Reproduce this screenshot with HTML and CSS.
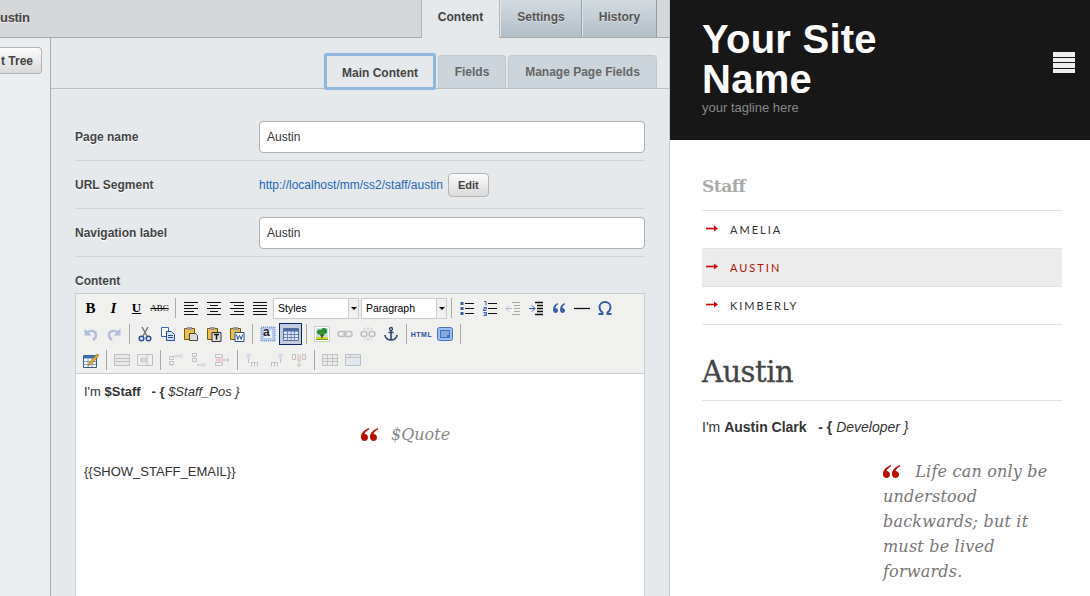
FILE: index.html
```html
<!DOCTYPE html>
<html lang="en">
<head>
  <meta charset="UTF-8">
  <title>Austin - CMS preview</title>
  <link rel="stylesheet" href="styles.css">
</head>
<body>

<div class="cms">
  <div class="topbar">
    <div class="page-title">ustin</div>
    <div class="tabs">
      <div class="tab active">Content</div>
      <div class="tab">Settings</div>
      <div class="tab">History</div>
    </div>
  </div>

  <div class="cms-main">
    <div class="sidebar">
      <button class="btn tree-btn">t Tree</button>
    </div>

    <div class="panel">
      <div class="subtabs">
        <div class="subtab focus">Main Content</div>
        <div class="subtab">Fields</div>
        <div class="subtab">Manage Page Fields</div>
      </div>

      <div class="form">
        <div class="field first">
          <label>Page name</label>
          <div class="input">Austin</div>
        </div>
        <div class="field url">
          <label>URL Segment</label>
          <a class="url-link">http://localhost/mm/ss2/staff/austin</a>
          <button class="btn edit-btn">Edit</button>
        </div>
        <div class="field">
          <label>Navigation label</label>
          <div class="input">Austin</div>
        </div>

        <div class="content-label">Content</div>
        <div class="editor">
          <div class="toolbar">
            <div class="tool-row">
              <span class="tb txt b">B</span>
              <span class="tb txt i">I</span>
              <span class="tb txt u">U</span>
              <span class="tb txt abc">ABC</span>
              <span class="sep"></span>
              <span class="tb"><svg viewBox="0 0 16 16"><path d="M1 2.500h14M1 5.500h10M1 8.500h14M1 11.500h10M1 14.500h14" stroke="#111"/></svg></span>
              <span class="tb"><svg viewBox="0 0 16 16"><path d="M1 2.500h14M4 5.500h8M1 8.500h14M4 11.500h8M1 14.500h14" stroke="#111"/></svg></span>
              <span class="tb"><svg viewBox="0 0 16 16"><path d="M1 2.500h14M5 5.500h10M1 8.500h14M5 11.500h10M1 14.500h14" stroke="#111"/></svg></span>
              <span class="tb"><svg viewBox="0 0 16 16"><path d="M1 2.500h14M1 5.500h14M1 8.500h14M1 11.500h14M1 14.500h14" stroke="#111"/></svg></span>
              <div class="select"><span>Styles</span><i class="caret"></i></div>
              <div class="select para"><span>Paragraph</span><i class="caret"></i></div>
              <span class="sep"></span>
              <span class="tb"><svg viewBox="0 0 16 16"><path d="M6 3.500h9M6 8.500h9M6 13.500h9" stroke="#111"/><path d="M1.500 2h3v3h-3zM1.500 7h3v3h-3zM1.500 12h3v3h-3z" fill="#3a5a9a"/></svg></span>
              <span class="tb"><svg viewBox="0 0 16 16"><path d="M6 3.500h9M6 8.500h9M6 13.500h9" stroke="#111"/><path d="M2 1.500h2v4M1.500 7.500h3v1.500h-3v1.500h3M1.500 12.500h3v3h-3M2 14h2" stroke="#3a62b8" fill="none"/></svg></span>
              <span class="tb"><svg class="off" viewBox="0 0 16 16"><path d="M7 2.500h8M9 5.500h6M9 8.500h6M9 11.500h6M7 14.500h8" stroke="#222"/><path d="M7 8.500H1M4 5.500l-3 3 3 3" stroke="#3a62b8" fill="none"/></svg></span>
              <span class="tb"><svg viewBox="0 0 16 16"><path d="M7 2.500h8M9 5.500h6M9 8.500h6M9 11.500h6M7 14.500h8" stroke="#111" stroke-width="1.300"/><path d="M1 8.500h6M4 5.500l3 3-3 3" stroke="#2a52a8" fill="none"/></svg></span>
              <span class="tb"><svg viewBox="0 0 16 16"><path d="M7 3C4 4 2 6 2 9.500 2 11.500 3 13 4.500 13S7 12 7 10.500 6 8 4.500 8C4.500 6.500 5.500 5 7 4.500zM14 3c-3 1-5 3-5 6.500 0 2 1 3.500 2.500 3.500S14 12 14 10.500 13 8 11.500 8c0-1.500 1-3 2.500-3.500z" fill="#3a5fa8"/></svg></span>
              <span class="tb"><svg viewBox="0 0 16 16"><path d="M0 8.500h16" stroke="#111" stroke-width="1.300"/></svg></span>
              <span class="tb"><svg viewBox="0 0 16 16"><path d="M1.500 14h4v-1.500C3.500 11 2.500 9 2.500 7 2.500 4 5 2 8 2s5.500 2 5.500 5c0 2-1 4-3 5.500V14h4" fill="none" stroke="#2f5ba8" stroke-width="1.900"/></svg></span>
            </div>

            <div class="tool-row">
              <span class="tb"><svg class="off" viewBox="0 0 16 16"><path d="M4 6.500C8 3.500 13 5 13 9c0 2.500-1.500 4-3 5" fill="none" stroke="#3a62b8" stroke-width="2.400"/><path d="M1.500 2.500v7h7z" fill="#3a62b8"/></svg></span>
              <span class="tb"><svg class="off" viewBox="0 0 16 16"><path d="M12 6.500C8 3.500 3 5 3 9c0 2.500 1.500 4 3 5" fill="none" stroke="#3a62b8" stroke-width="2.400"/><path d="M14.500 2.500v7h-7z" fill="#3a62b8"/></svg></span>
              <span class="sep"></span>
              <span class="tb"><svg viewBox="0 0 16 16"><path d="M5 1l5 9M11 1l-5 9" stroke="#777" stroke-width="1.500"/><circle cx="4.500" cy="12.500" r="2.300" fill="none" stroke="#2a4f9a" stroke-width="1.500"/><circle cx="11.500" cy="12.500" r="2.300" fill="none" stroke="#2a4f9a" stroke-width="1.500"/></svg></span>
              <span class="tb"><svg viewBox="0 0 16 16"><path d="M1.500 1.500h7v9h-7z" fill="#fff" stroke="#3a62b8"/><path d="M6.500 5.500h5l3 3v6h-8z" fill="#cfe0f8" stroke="#2a4f9a"/><path d="M8 9.500h5M8 11.500h5" stroke="#2a4f9a"/></svg></span>
              <span class="tb"><svg viewBox="0 0 16 16"><path d="M1.500 2.500h10v11h-10z" fill="#e8c050" stroke="#7a5a10"/><path d="M4 1h5v3H4z" fill="#999"/><path d="M6.500 7.500h6l2 2v5h-8z" fill="#ddd" stroke="#444"/></svg></span>
              <span class="tb"><svg viewBox="0 0 16 16"><path d="M1.500 2.500h10v11h-10z" fill="#e8c050" stroke="#7a5a10"/><path d="M4 1h5v3H4z" fill="#999"/><path d="M6 6.500h9v9H6z" fill="#ddd" stroke="#333"/><path d="M8 8.500h5M10.500 8.500v5" stroke="#111" stroke-width="1.500"/></svg></span>
              <span class="tb"><svg viewBox="0 0 16 16"><path d="M1.500 2.500h10v11h-10z" fill="#e8c050" stroke="#7a5a10"/><path d="M4 1h5v3H4z" fill="#999"/><path d="M6 6.500h9v9H6z" fill="#fff" stroke="#2a4f9a"/><path d="M7.500 8.500l1.200 5 1.800-4 1.800 4 1.200-5" fill="none" stroke="#2a4f9a"/></svg></span>
              <span class="sep"></span>
              <span class="tb"><svg viewBox="0 0 16 16"><path d="M1 1h14v14H1z" fill="#b8ccf0"/><path d="M1 1h14v14H1z" fill="none" stroke="#5a80d0" stroke-dasharray="1 1"/><path d="M4 4h8v8H4z" fill="#eee"/></svg><em class="tb-a">a</em></span>
              <span class="tb on"><svg viewBox="0 0 16 16"><path d="M.500 2.500h15v12H.500z" fill="#dfe6f4" stroke="#5a6f98"/><path d="M1 2.500h14v3H1z" fill="#4a6aa8"/><path d="M4.500 5v9M8 5v9M11.500 5v9M1 8.500h14M1 11.500h14" stroke="#6f86b4"/></svg></span>
              <span class="sep"></span>
              <span class="tb"><svg viewBox="0 0 16 16"><path d="M.500 .500h15v15H.500z" fill="#fff" stroke="#ccc"/><path d="M2 2h12v9H2z" fill="#bfe4ee"/><path d="M2 11h12v3H2z" fill="#e8d020"/><path d="M2 13h12v1H2z" fill="#5aa02a"/><circle cx="5.500" cy="6" r="2.500" fill="#2a8a2a"/><circle cx="10" cy="5" r="3" fill="#2a8a2a"/><circle cx="8" cy="8" r="2.500" fill="#3a9a3a"/><path d="M7.300 8h1.400v4H7.300z" fill="#5a3a10"/></svg></span>
              <span class="tb"><svg class="off" viewBox="0 0 16 16"><rect x="1" y="5.500" width="8" height="5" rx="2.500" fill="none" stroke="#667" stroke-width="1.500"/><rect x="7" y="5.500" width="8" height="5" rx="2.500" fill="none" stroke="#667" stroke-width="1.500"/></svg></span>
              <span class="tb"><svg class="off" viewBox="0 0 16 16"><rect x="1" y="5.500" width="6" height="5" rx="2.500" fill="none" stroke="#667" stroke-width="1.500"/><rect x="9" y="5.500" width="6" height="5" rx="2.500" fill="none" stroke="#667" stroke-width="1.500"/><path d="M8 1v3M8 12v3M4 2l1.500 2M12 2l-1.500 2M4 14l1.500-2M12 14l-1.500-2" stroke="#667"/></svg></span>
              <span class="tb"><svg viewBox="0 0 16 16"><circle cx="8" cy="3" r="1.500" fill="none" stroke="#2c4770" stroke-width="1.300"/><path d="M8 4.500V14M5.500 6.500h5M2 9c0 3 3 5 6 5s6-2 6-5" fill="none" stroke="#2c4770" stroke-width="1.600"/></svg></span>
              <span class="sep"></span>
              <span class="tb txt html">HTML</span>
              <span class="tb"><svg viewBox="0 0 16 16"><rect x=".500" y="1.500" width="15" height="13" rx="2" fill="#9cc0f0" stroke="#4a70b8"/><path d="M3 4h10v8H3z" fill="#3e70c8"/><path d="M4 6h8M4 8h8M4 10h6" stroke="#cfe0f8"/></svg></span>
              <span class="sep"></span>
            </div>

            <div class="tool-row">
              <span class="tb"><svg viewBox="0 0 16 16"><path d="M.500 3.500h13v12H.500z" fill="#fff" stroke="#3a5a8a"/><path d="M1 3.500h12v3H1z" fill="#3f6fb0"/><path d="M5 6v9M9 6v9M1 9.500h12M1 12.500h12" stroke="#8aa4c8"/><path d="M6 11l8-9 2 1.500-8 9-2.500 1z" fill="#e8b030" stroke="#6a4a10" stroke-width=".5"/></svg></span>
              <span class="sep"></span>
              <span class="tb"><svg class="off" viewBox="0 0 16 16"><path d="M.500 2.500h15v11H.500z" fill="#d5d9e0" stroke="#667"/><path d="M1 6.500h14M1 9.500h14" stroke="#667"/></svg></span>
              <span class="tb"><svg class="off" viewBox="0 0 16 16"><path d="M.500 2.500h15v11H.500z" fill="#eee" stroke="#667"/><path d="M3 5.500h7v5H3z" fill="#9aa4b8"/><path d="M10 2.500v11" stroke="#667"/></svg></span>
              <span class="sep"></span>
              <span class="tb"><svg class="off" viewBox="0 0 16 16"><path d="M1.500 4.500h4v3h-4zM1.500 9.500h4v3h-4zM1.500 13h4" fill="none" stroke="#667"/><path d="M10 2.500h5v3h-5z" fill="#a8bcdc"/><path d="M6 4h4" stroke="#667"/></svg></span>
              <span class="tb"><svg class="off" viewBox="0 0 16 16"><path d="M1.500 1.500h4v3h-4zM1.500 6.500h4v3h-4z" fill="none" stroke="#667"/><path d="M10 11.500h5v3h-5z" fill="#a8bcdc"/><path d="M6 13h4" stroke="#667"/></svg></span>
              <span class="tb"><svg class="off" viewBox="0 0 16 16"><path d="M1.500 2.500h7v3h-7zM1.500 10.500h7v3h-7z" fill="none" stroke="#667"/><path d="M1.500 6.500h9v3h-9z" fill="#e09090"/><path d="M10 8h5M13 6l2 2-2 2" fill="none" stroke="#667"/></svg></span>
              <span class="sep"></span>
              <span class="tb"><svg class="off" viewBox="0 0 16 16"><path d="M1.500 1.500h4v5h-4z" fill="#a8bcdc"/><path d="M3.500 7v4M6.500 10.500h3v4M9.500 10.500h3v4M6.500 10.500v4" fill="none" stroke="#667"/></svg></span>
              <span class="tb"><svg class="off" viewBox="0 0 16 16"><path d="M10.500 1.500h4v5h-4z" fill="#a8bcdc"/><path d="M12.500 7v4M3.500 10.500h3v4M6.500 10.500h3v4M3.500 10.500v4" fill="none" stroke="#667"/></svg></span>
              <span class="tb"><svg class="off" viewBox="0 0 16 16"><path d="M1.500 2.500h3v5h-3zM11.500 2.500h3v5h-3z" fill="none" stroke="#667"/><path d="M6 2.500h4v7H6z" fill="#e09090"/><path d="M8 9.500v5M6 12.500l2 2 2-2" fill="none" stroke="#667"/></svg></span>
              <span class="sep"></span>
              <span class="tb"><svg class="off" viewBox="0 0 16 16"><path d="M.500 2.500h15v11H.500z" fill="#dde3ee" stroke="#667"/><path d="M5.500 2.500v11M10.500 2.500v11M1 6.500h14M1 9.500h14" stroke="#667"/></svg></span>
              <span class="tb"><svg class="off" viewBox="0 0 16 16"><path d="M.500 2.500h15v11H.500z" fill="#c8d8f0" stroke="#667"/><path d="M5.500 2.500v3M1 5.500h14" stroke="#667"/></svg></span>
            </div>
          </div>

          <div class="editor-body">
            <p>I'm <strong>$Staff &nbsp; - {</strong> <em>$Staff_Pos }</em></p>
            <div class="quote-line">
              <svg class="quote-mark" viewBox="0 0 17 13"><path d="M8 0C3 2 0 5 0 9c0 2.500 1.500 4 3.500 4S7 11.500 7 9.500 5.500 6 3.500 6C4 4 6 2.500 8 1.500zM17 0c-5 2-8 5-8 9 0 2.500 1.500 4 3.500 4s3.500-1.500 3.500-3.500S14.500 6 12.500 6c.5-2 2.500-3.500 4.500-4.500z"/></svg>
              <span>$Quote</span>
            </div>
            <p>{{SHOW_STAFF_EMAIL}}</p>
          </div>
        </div>
      </div>
    </div>
  </div>
</div>

<div class="site">
  <header class="site-head">
    <div>
      <h1>Your Site Name</h1>
      <div class="tagline">your tagline here</div>
    </div>
    <div class="burger"><i></i><i></i><i></i><i></i></div>
  </header>

  <div class="site-body">
    <h3>Staff</h3>
    <ul class="staff-nav">
      <li><svg viewBox="0 0 12 7"><path d="M0 2.700h9v1.600H0z"/><path d="M8 .5L12 3.500 8 6.500z"/></svg>AMELIA</li>
      <li class="current"><svg viewBox="0 0 12 7"><path d="M0 2.700h9v1.600H0z"/><path d="M8 .5L12 3.500 8 6.500z"/></svg>AUSTIN</li>
      <li><svg viewBox="0 0 12 7"><path d="M0 2.700h9v1.600H0z"/><path d="M8 .5L12 3.500 8 6.500z"/></svg>KIMBERLY</li>
    </ul>

    <h2>Austin</h2>
    <p class="intro">I'm <strong>Austin Clark &nbsp; - {</strong> <em>Developer }</em></p>

    <blockquote>
      <svg class="quote-mark" viewBox="0 0 17 13"><path d="M8 0C3 2 0 5 0 9c0 2.500 1.500 4 3.500 4S7 11.500 7 9.500 5.500 6 3.500 6C4 4 6 2.500 8 1.500zM17 0c-5 2-8 5-8 9 0 2.500 1.500 4 3.500 4s3.500-1.500 3.500-3.500S14.500 6 12.500 6c.5-2 2.500-3.500 4.500-4.500z"/></svg>
      Life can only be understood backwards; but it must be lived forwards.
    </blockquote>
  </div>
</div>

</body>
</html>
```

FILE: styles.css
```css
* {
  box-sizing: border-box;
}
html, body {
  height: 100%;
}
body {
  margin: 0;
  display: flex;
  height: 596px;
  overflow: hidden;
  font-family: "Liberation Sans", Arial, sans-serif;
  font-size: 12px;
  color: #333;
  background: #fff;
}

/* left side, the cms */
.cms {
  width: 670px;
  flex-shrink: 0;
  display: flex;
  flex-direction: column;
  overflow: hidden;
  background: #e6e9ec;
  border-right: 1px solid #c4c8cb;
}
.topbar {
  height: 38px;
  flex-shrink: 0;
  display: flex;
  justify-content: space-between;
  padding-right: 12px;
  background: #d6d7d9;
  border-bottom: 1px solid #aaa;
}
.page-title {
  font-size: 13px;
  font-weight: bold;
  letter-spacing: -.3px;
  line-height: 35px;
  color: #444;
  text-shadow: 0 1px 0 #eee;
}
.tabs {
  display: flex;
  height: 38px;
}
.tab {
  width: 75px;
  height: 37px;
  padding-top: 10px;
  text-align: center;
  font-weight: bold;
  color: #555;
  text-shadow: 0 1px 0 #ddd;
  background: linear-gradient(#d3dbe1, #b0bec8);
  border-right: 1px solid #8ea0ae;
  border-left: 1px solid #e0e5e9;
}
.tab:nth-child(2) {
  width: 82px;
}
.tab.active {
  width: 79px;
  height: 38px;
  color: #444;
  background: #e6e9ec;
  border-left: 1px solid #b5b5b5;
  border-right: 1px solid #b5b5b5;
}
.cms-main {
  flex: 1;
  display: flex;
  min-height: 0;
}
.sidebar {
  width: 51px;
  flex-shrink: 0;
  padding-top: 9px;
  background: #ebeef1;
  border-right: 1px solid #aaa;
}
.btn {
  flex-shrink: 0;
  font-family: inherit;
  font-weight: bold;
  color: #444;
  background: linear-gradient(#fbfbfb, #d9d9d9);
  border: 1px solid #b4b4b4;
  border-radius: 4px;
}
.tree-btn {
  display: block;
  width: 42px;
  height: 27px;
  padding: 0 8px 0 0;
  font-size: 12px;
  text-align: right;
  border-left: 0;
  border-radius: 0 4px 4px 0;
}
.panel {
  flex: 1;
  min-width: 0;
}
.subtabs {
  height: 51px;
  display: flex;
  justify-content: flex-end;
  align-items: flex-end;
  gap: 2px;
  padding-right: 12px;
  border-bottom: 1px solid #bdbdbd;
}
.subtab {
  height: 33px;
  padding-top: 9px;
  text-align: center;
  white-space: nowrap;
  font-weight: bold;
  color: #666;
  background: #ccd5db;
  border: 1px solid #c2c9ce;
  border-bottom: 0;
  border-radius: 4px 4px 0 0;
}
.subtab:nth-child(2) {
  width: 68px;
}
.subtab:nth-child(3) {
  width: 149px;
}
.subtab.focus {
  width: 112px;
  height: 37px;
  margin-bottom: -2px;
  padding-top: 10px;
  color: #444;
  background: #e6e9ec;
  border: 3px solid #8fb8e0;
  border-radius: 3px;
  box-shadow: 0 0 1px #8fb8e0;
}
.form {
  padding: 0 24px;
}
.field {
  display: flex;
  align-items: center;
  height: 48px;
  border-bottom: 1px solid #d2d5d8;
}
.field.first {
  height: 72px;
  padding-top: 25px;
}
.field label {
  width: 184px;
  flex-shrink: 0;
  font-weight: bold;
  color: #444;
  text-shadow: 0 1px 0 #fff;
}
.input {
  flex: 1;
  height: 32px;
  padding: 0 7px;
  line-height: 30px;
  color: #333;
  background: #fff;
  border: 1px solid #b0b0b0;
  border-radius: 4px;
}
.url-link {
  color: #1a68b4;
}
.edit-btn {
  width: 41px;
  height: 24px;
  margin-left: 5px;
  padding: 0;
  font-size: 11px;
}
.content-label {
  margin-top: 17px;
  height: 19px;
  font-weight: bold;
  color: #444;
  text-shadow: 0 1px 0 #fff;
}
.editor {
  height: 320px;
  background: #fff;
  border: 1px solid #ccc;
}
.toolbar {
  height: 80px;
  padding: 1px 3px 0;
  background: #f0f0ee;
  border-bottom: 1px solid #ccc;
}
.tool-row {
  display: flex;
  align-items: center;
  height: 26px;
}
.tb {
  position: relative;
  width: 23px;
  height: 22px;
  display: flex;
  align-items: center;
  justify-content: center;
  flex-shrink: 0;
}
.tb svg {
  width: 16px;
  height: 16px;
  display: block;
}
.tb svg.off {
  opacity: .35;
}
.tb.on {
  background: #c2cbe0;
  border: 1px solid #0a246a;
}
.txt {
  font-family: "Liberation Serif", serif;
  font-size: 15px;
  font-weight: bold;
  color: #000;
}
.txt.i {
  font-style: italic;
}
.txt.u {
  font-size: 13px;
  text-decoration: underline;
}
.txt.abc {
  font-size: 9px;
  font-weight: normal;
  text-decoration: line-through;
}
.txt.html {
  font-family: "Liberation Sans", sans-serif;
  font-size: 7px;
  letter-spacing: .5px;
  color: #2a4f9a;
}
.tb-a {
  position: absolute;
  left: 7px;
  top: 2px;
  font-family: "Liberation Sans", sans-serif;
  font-size: 12px;
  font-weight: bold;
  font-style: normal;
  color: #223;
}
.sep {
  width: 8px;
  height: 20px;
  flex-shrink: 0;
  background: linear-gradient(#a8a8a8, #a8a8a8) center / 1px 100% no-repeat;
}
.select {
  width: 86px;
  height: 21px;
  margin-left: 2px;
  flex-shrink: 0;
  display: flex;
  align-items: center;
  justify-content: space-between;
  padding-left: 4px;
  font-size: 10.500px;
  color: #000;
  background: #fff;
  border: 1px solid #ccc;
}
.caret {
  width: 10px;
  height: 100%;
  background: #f0f0ee;
  border-left: 1px solid #ccc;
  display: flex;
  align-items: center;
  justify-content: center;
}
.caret::after {
  content: "";
  border: 3px solid transparent;
  border-top: 3px solid #000;
  border-bottom: 0;
}
.editor-body {
  padding: 10px 8px;
  font-size: 13px;
  color: #333;
}
.editor-body p {
  margin: 0;
  line-height: 15px;
}
.quote-line {
  display: flex;
  align-items: center;
  gap: 13px;
  height: 45px;
  padding-left: 277px;
  margin: 13px 0 7px;
  font-family: "DejaVu Serif", serif;
  font-size: 16px;
  font-style: italic;
  color: #888;
}
.quote-mark {
  width: 17px;
  height: 13px;
  flex-shrink: 0;
  fill: #b80f00;
}

/* right side, the site */
.site {
  flex: 1;
  min-width: 0;
}
.site-head {
  height: 140px;
  display: flex;
  justify-content: space-between;
  padding: 19px 15px 0 32px;
  color: #fff;
  background: #171717;
}
.site-head h1 {
  margin: 0;
  width: 200px;
  font-size: 40px;
  line-height: 40px;
  letter-spacing: .25px;
}
.tagline {
  margin-top: 1px;
  font-size: 13px;
  line-height: 16px;
  color: #888;
}
.burger {
  width: 22px;
  margin-top: 33px;
  display: flex;
  flex-direction: column;
  gap: 1px;
}
.burger i {
  height: 4.500px;
  background: #eee;
}
.site-body {
  padding: 0 28px 0 32px;
}
.site-body h3 {
  margin: 0;
  height: 71px;
  padding-top: 35px;
  font-family: "DejaVu Serif", serif;
  font-size: 17px;
  line-height: 22px;
  font-weight: bold;
  letter-spacing: -.5px;
  color: #aaa;
  border-bottom: 1px solid #e2e2e2;
}
.staff-nav {
  margin: 0;
  padding: 0;
  list-style: none;
}
.staff-nav li {
  height: 38px;
  display: flex;
  align-items: center;
  padding-left: 4px;
  font-family: Lato, sans-serif;
  font-size: 11px;
  letter-spacing: 2px;
  color: #333;
  border-bottom: 1px solid #e2e2e2;
}
.staff-nav svg {
  width: 12px;
  height: 7px;
  margin: -3px 12px 0 0;
  fill: #c00;
}
.staff-nav li.current {
  color: #b80f00;
  background: #ececec;
}
.site-body h2 {
  margin: 0;
  height: 76px;
  padding-top: 28px;
  font-family: "DejaVu Serif", serif;
  font-size: 29px;
  line-height: 38px;
  font-weight: normal;
  letter-spacing: -.5px;
  color: #444;
  -webkit-text-stroke: .3px #444;
  border-bottom: 1px solid #e2e2e2;
}
.intro {
  margin: 18px 0 0;
  font-size: 14px;
  line-height: 16px;
  color: #333;
}
blockquote {
  width: 165px;
  margin: 24px 0 0 181px;
  font-family: "DejaVu Serif", serif;
  font-size: 16px;
  font-style: italic;
  letter-spacing: .2px;
  line-height: 25px;
  color: #777;
}
blockquote .quote-mark {
  margin-right: 10px;
  vertical-align: -1px;
}
```
